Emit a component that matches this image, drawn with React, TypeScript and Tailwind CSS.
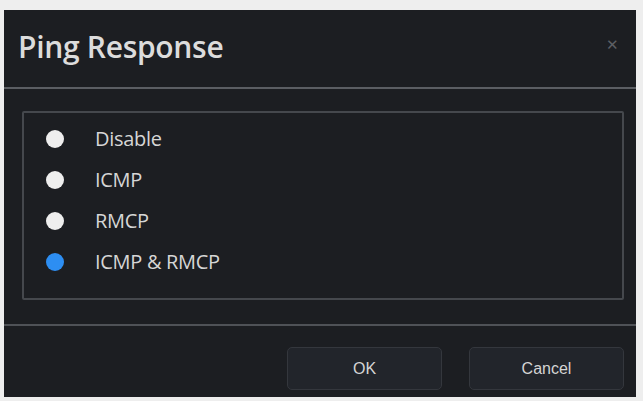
import { useState } from "react";

const options = ["Disable", "ICMP", "RMCP", "ICMP & RMCP"];

export default function App() {
  const [selected, setSelected] = useState(3);

  return (
    <div className="w-[643px] h-[401px] bg-[#eeeeee] pt-[10px] pl-[4px]" style={{ fontFamily: '"Open Sans", "Noto Sans", sans-serif' }}>
      <div className="w-[632px] h-[387px] bg-[#1c1e22] flex flex-col">
        {/* Header */}
        <div className="h-[79px] shrink-0 flex items-center justify-between pl-[14px] pr-[17px] border-b-2 border-[#5b5e63]">
          <h1 className="text-[30px] text-[#dcdcdc] font-semibold tracking-[-0.3px] pb-[4px]">Ping Response</h1>
          <button className="text-[#5c5f64] text-[15px] leading-none pb-[8px]">✕</button>
        </div>

        {/* Body */}
        <div className="h-[237px] shrink-0 pt-[22px] pl-[18px] pr-[12px] border-b-2 border-[#4f5257]">
          <div className="h-[189px] border-2 border-[#45484d] rounded-[2px] flex flex-col pt-[16px] pl-[22px] gap-[21px]">
            {options.map((o, i) => (
              <label key={o} className="flex items-center h-[20px] cursor-pointer" onClick={() => setSelected(i)}>
                <span className={`w-[18px] h-[18px] rounded-full ${selected === i ? "bg-[#2d8ef2]" : "bg-[#eeeeee]"}`} />
                <span className="ml-[31px] text-[20px] text-[#d6d6d6] tracking-[-0.3px]">{o}</span>
              </label>
            ))}
          </div>
        </div>

        {/* Footer */}
        <div className="flex-1 flex justify-end items-start pt-[21px] pr-[12px] gap-[27px]">
          <button className="w-[155px] h-[43px] rounded-[5px] bg-[#22252b] border border-[#34373d] text-[#d4d4d4] text-[16px]" style={{ fontFamily: '"Liberation Sans", Arial, sans-serif' }}>OK</button>
          <button className="w-[155px] h-[43px] rounded-[5px] bg-[#22252b] border border-[#34373d] text-[#d4d4d4] text-[16px]" style={{ fontFamily: '"Liberation Sans", Arial, sans-serif' }}>Cancel</button>
        </div>
      </div>
    </div>
  );
}
